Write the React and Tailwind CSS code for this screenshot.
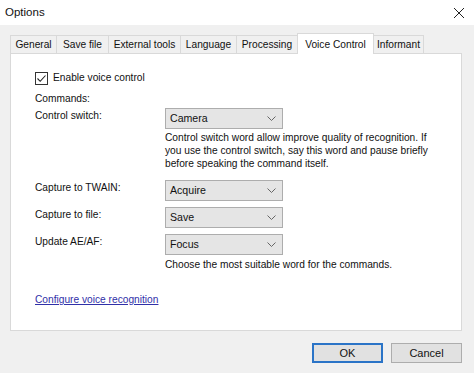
import { useState } from "react";

const tabs = ["General", "Save file", "External tools", "Language", "Processing", "Voice Control", "Informant"];
const tabWidths = [47, 53, 73, 57, 62, 77, 51];

function Combo({ value }) {
  return (
    <div className="w-[118px] h-[21px] bg-[#e5e5e5] border border-[#adadad] flex items-center justify-between pl-[4px] pr-[6px]">
      <span className="text-[10.6px]">{value}</span>
      <svg width="9" height="5" viewBox="0 0 9 5" className="text-[#666]">
        <path d="M0.5 0.5 L4.5 4.5 L8.5 0.5" fill="none" stroke="currentColor" strokeWidth="1" />
      </svg>
    </div>
  );
}

function Row({ label, value, className = "" }) {
  return (
    <div className={`flex items-start ${className}`}>
      <div className="w-[130px] leading-[14px] pt-[1px]">{label}</div>
      <Combo value={value} />
    </div>
  );
}

export default function App() {
  const [enabled, setEnabled] = useState(true);
  const active = "Voice Control";

  return (
    <div
      className="w-[474px] h-[373px] bg-[#f0f0f0] flex flex-col text-[10.2px] text-[#111] overflow-hidden whitespace-nowrap"
      style={{ fontFamily: '"Liberation Sans", Arial, sans-serif' }}
    >
      {/* title bar */}
      <div className="h-[25px] bg-white flex items-center justify-between pl-[5px] pr-[9px] shrink-0">
        <span className="text-[11.5px]">Options</span>
        <svg width="12" height="12" viewBox="0 0 12 12">
          <path d="M1 1 L11 11 M11 1 L1 11" stroke="#222" strokeWidth="1" />
        </svg>
      </div>

      <div className="pl-[10px] pt-[8px]">
        {/* tabs */}
        <div className="flex items-end h-[20px]">
          {tabs.map((t, i) => {
            const isActive = t === active;
            return (
              <div
                key={t}
                style={{ width: tabWidths[i] }}
                className={
                  isActive
                    ? "h-[21px] bg-white border border-b-0 border-[#d9d9d9] -mb-[1px] relative z-10 flex items-start justify-center pt-[3px] -ml-[1px]"
                    : "h-[18px] bg-[#f0f0f0] border border-b-0 border-[#d9d9d9] flex items-center justify-center -ml-[1px] first:ml-0"
                }
              >
                {t}
              </div>
            );
          })}
        </div>

        {/* panel */}
        <div className="w-[452px] h-[278px] bg-white border border-[#d9d9d9] pl-[24px] flex flex-col">
          <label className="flex items-center h-[14px] mt-[17px] gap-[5px]">
            <span
              onClick={() => setEnabled(!enabled)}
              className="w-[13px] h-[13px] border border-[#333] bg-white flex items-center justify-center"
            >
              {enabled && (
                <svg width="11" height="11" viewBox="0 0 11 11">
                  <path d="M1.5 5.5 L4.2 8.3 L9.5 2.5" fill="none" stroke="#222" strokeWidth="1.1" />
                </svg>
              )}
            </span>
            <span>Enable voice control</span>
          </label>

          <div className="h-[14px] leading-[14px] mt-[7px]">Commands:</div>

          <Row label="Control switch:" value="Camera" className="mt-[2px]" />
          <p className="ml-[130px] mt-[2px] leading-[13px]">
            Control switch word allow improve quality of recognition. If
            <br />
            you use the control switch, say this word and pause briefly
            <br />
            before speaking the command itself.
          </p>

          <Row label="Capture to TWAIN:" value="Acquire" className="mt-[10px]" />
          <Row label="Capture to file:" value="Save" className="mt-[6px]" />
          <Row label="Update AE/AF:" value="Focus" className="mt-[6px]" />
          <p className="ml-[130px] mt-[3px] leading-[13px]">Choose the most suitable word for the commands.</p>

          <a href="#" className="mt-[22px] leading-[14px] text-[#3030a8] underline w-fit">
            Configure voice recognition
          </a>
        </div>

        {/* buttons */}
        <div className="flex justify-end gap-[8px] w-[452px] mt-[12px]">
          <button className="w-[71px] h-[20px] bg-[#e1e1e1] border-2 border-[#2b74c7] flex items-center justify-center text-[11px]">
            OK
          </button>
          <button className="w-[71px] h-[20px] bg-[#e1e1e1] border border-[#adadad] flex items-center justify-center text-[11px]">
            Cancel
          </button>
        </div>
      </div>
    </div>
  );
}
